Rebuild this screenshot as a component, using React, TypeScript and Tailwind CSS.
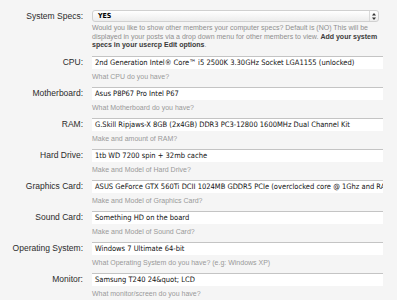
const FIELDS: { label: string; value: string; help: string }[] = [
  {
    label: "CPU:",
    value: "2nd Generation Intel® Core™ i5 2500K 3.30GHz Socket LGA1155 (unlocked)",
    help: "What CPU do you have?",
  },
  { label: "Motherboard:", value: "Asus P8P67 Pro Intel P67", help: "What Motherboard do you have?" },
  {
    label: "RAM:",
    value: "G.Skill Ripjaws-X 8GB (2x4GB) DDR3 PC3-12800 1600MHz Dual Channel Kit",
    help: "Make and amount of RAM?",
  },
  { label: "Hard Drive:", value: "1tb WD 7200 spin + 32mb cache", help: "Make and Model of Hard Drive?" },
  {
    label: "Graphics Card:",
    value: "ASUS GeForce GTX 560Ti DCII 1024MB GDDR5 PCIe (overclocked core @ 1Ghz and RAM @ 4.2Ghz)",
    help: "Make and Model of Graphics Card?",
  },
  { label: "Sound Card:", value: "Something HD on the board", help: "Make and Model of Sound Card?" },
  {
    label: "Operating System:",
    value: "Windows 7 Ultimate 64-bit",
    help: "What Operating System do you have? (e.g: Windows XP)",
  },
  { label: "Monitor:", value: "Samsung T240 24&quot; LCD", help: "What monitor/screen do you have?" },
];

function Row({ label, children }: { label: string; children: React.ReactNode }) {
  return (
    <div className="flex items-start">
      <div className="w-[83px] shrink-0 whitespace-nowrap text-right text-[8.5px] leading-[13px] text-[#2b2b2b]">
        {label}
      </div>
      <div className="ml-[9px] min-w-0 flex-1">{children}</div>
    </div>
  );
}

function TextField({ value }: { value: string }) {
  return (
    <div className="h-[13px] w-[291px] overflow-hidden whitespace-nowrap border-t border-[#c4c4c4] bg-white pl-[3px] text-[7.5px] leading-[12px] text-[#111] [font-family:'DejaVu_Sans_Condensed','Liberation_Sans',sans-serif]">
      {value}
    </div>
  );
}

export default function App() {
  return (
    <div className="h-[300px] w-[397px] overflow-hidden bg-[#f5f5f5] pt-[10px] [font-family:'Liberation_Sans',Arial,sans-serif]">
      <Row label="System Specs:">
        <div className="relative flex h-[12px] w-[287px] items-center rounded-[3px] border border-[#d0d0d0] bg-gradient-to-b from-white to-[#ededed] pl-[5px]">
          <span className="text-[7px] font-bold leading-none text-black [font-family:'DejaVu_Sans_Condensed',sans-serif]">
            YES
          </span>
          <div className="absolute right-0 top-0 flex h-full w-[9px] items-center justify-center border-l border-[#dadada]">
            <svg width="4" height="7" viewBox="0 0 4 7">
              <path d="M2 0 L4 2.6 L0 2.6 Z" fill="#333" />
              <path d="M2 7 L4 4.4 L0 4.4 Z" fill="#333" />
            </svg>
          </div>
        </div>
        <p className="mt-[2px] w-[292px] text-[7px] leading-[8.5px] text-[#8f8f8f]">
          Would you like to show other members your computer specs? Default is (NO) This will be
          displayed in your posts via a drop down menu for other members to view.{" "}
          <b className="text-[#3a3a3a]">Add your system specs in your usercp Edit options</b>.
        </p>
      </Row>
      <div className="mt-[6px] flex flex-col gap-[5px]">
        {FIELDS.map((f) => (
          <Row key={f.label} label={f.label}>
            <TextField value={f.value} />
            <p className="mt-[3px] whitespace-nowrap text-[7px] leading-[10px] text-[#999]">{f.help}</p>
          </Row>
        ))}
      </div>
    </div>
  );
}
